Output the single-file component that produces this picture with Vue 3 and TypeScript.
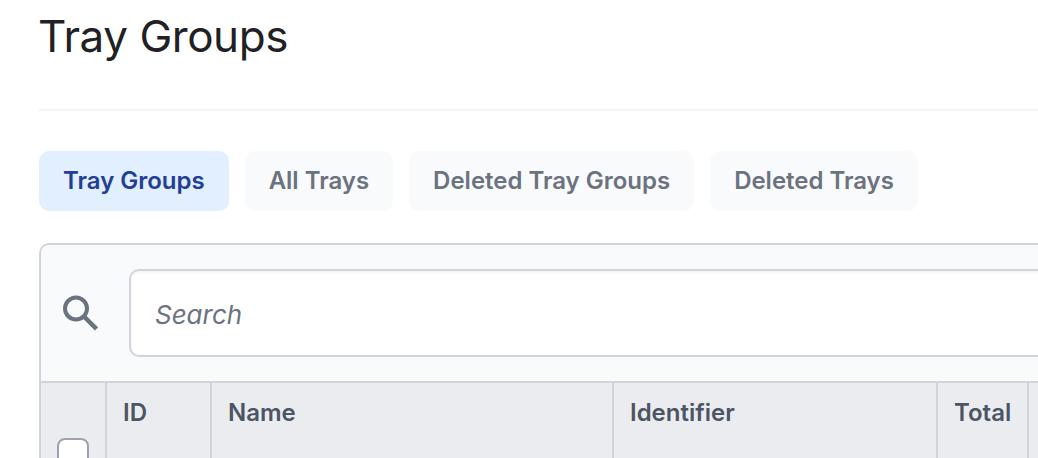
<script setup lang="ts">
const tabs = ['Tray Groups', 'All Trays', 'Deleted Tray Groups', 'Deleted Trays']
const cols = [
  { label: '', width: 66 },
  { label: 'ID', width: 105 },
  { label: 'Name', width: 402 },
  { label: 'Identifier', width: 324 },
  { label: 'Total', width: 91 },
  { label: '', width: 200 },
]
</script>

<template>
  <div class="page">
    <h1 class="title">Tray Groups</h1>
    <div class="rule"></div>
    <nav class="tabs">
      <button v-for="(t, i) in tabs" :key="t" class="tab" :class="{ active: i === 0 }">{{ t }}</button>
    </nav>
    <section class="card">
      <div class="toolbar">
        <svg class="icon" viewBox="0 0 36 36" width="36" height="36" fill="none" stroke="#6b7280">
          <circle cx="14" cy="13.5" r="11" stroke-width="4" />
          <path d="M22 21.5 L34.5 34" stroke-width="4.5" />
        </svg>
        <input class="search" placeholder="Search" />
      </div>
      <div class="thead">
        <div v-for="(c, i) in cols" :key="i" class="th" :style="{ width: c.width + 'px' }">
          <span v-if="c.label">{{ c.label }}</span>
          <span v-else-if="i === 0" class="check"></span>
        </div>
      </div>
    </section>
  </div>
</template>

<style>
html, body { margin: 0; overflow: hidden; background: #fff; }
</style>

<style scoped>
.page {
  width: 1300px;
  height: 458px;
  overflow: hidden;
  padding-left: 39px;
  box-sizing: border-box;
  font-family: Inter, "Liberation Sans", sans-serif;
}
.title {
  margin: 0 0 0 -1px;
  height: 109px;
  padding-top: 9px;
  box-sizing: border-box;
  font-size: 44px;
  line-height: 54px;
  font-weight: 400;
  color: #1f2124;
  letter-spacing: -0.45px;
}
.rule { height: 2px; background: #f3f4f6; }
.tabs { display: flex; gap: 16px; margin-top: 40px; }
.tab {
  height: 60px;
  padding: 0 24px;
  border: 0;
  border-radius: 10px;
  background: #f9fafb;
  color: #6b7280;
  font: 600 24px/60px Inter, "Liberation Sans", sans-serif;
  letter-spacing: -0.012px;
}
.tab.active { background: #e1effe; color: #233e96; }
.card {
  margin-top: 32px;
  border: 2px solid #d1d5db;
  border-bottom: 0;
  border-radius: 10px 0 0 0;
  background: #f9fafb;
}
.toolbar {
  display: flex;
  align-items: center;
  height: 138px;
  padding-left: 21px;
  box-sizing: border-box;
  border-bottom: 2px solid #d1d5db;
}
.icon { flex: none; }
.search {
  margin-left: 31px;
  flex: 1;
  height: 88px;
  box-sizing: border-box;
  padding: 2px 24px 0;
  border: 2px solid #d1d5db;
  border-radius: 10px;
  background: #fff;
  font: italic 400 26px Inter, "Liberation Sans", sans-serif;
  box-shadow: inset 0 1px 3px rgba(0, 0, 0, 0.06);
}
.search::placeholder { color: #6b7280; opacity: 1; }
.thead { display: flex; background: #ebecf0; height: 120px; }
.th {
  flex: none;
  box-sizing: border-box;
  border-right: 2px solid #d1d5db;
  padding: 15px 16px 0;
  color: #4b5563;
  font-size: 24px;
  font-weight: 600;
  line-height: 30px;
}
.th:first-child { padding: 0; position: relative; }
.check {
  position: absolute;
  left: 16px;
  top: 55px;
  width: 32px;
  height: 32px;
  box-sizing: border-box;
  border: 2px solid #9ca3af;
  border-radius: 8px;
  background: #fff;
}
</style>
